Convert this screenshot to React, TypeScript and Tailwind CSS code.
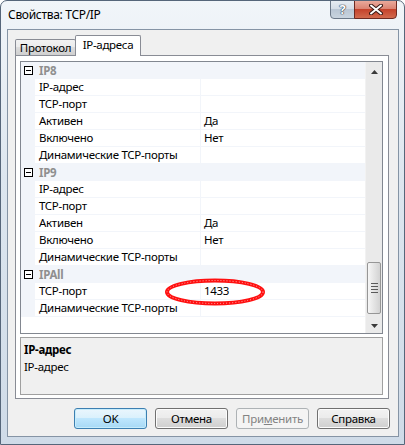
import React from "react";

type Row = [string, string];

const sections: { name: string; rows: Row[] }[] = [
  {
    name: "IP8",
    rows: [
      ["IP-адрес", ""],
      ["TCP-порт", ""],
      ["Активен", "Да"],
      ["Включено", "Нет"],
      ["Динамические TCP-порты", ""],
    ],
  },
  {
    name: "IP9",
    rows: [
      ["IP-адрес", ""],
      ["TCP-порт", ""],
      ["Активен", "Да"],
      ["Включено", "Нет"],
      ["Динамические TCP-порты", ""],
    ],
  },
  {
    name: "IPAll",
    rows: [
      ["TCP-порт", "1433"],
      ["Динамические TCP-порты", ""],
    ],
  },
];

function MinusBox() {
  return (
    <svg width="9" height="9" viewBox="0 0 9 9">
      <rect x="0.5" y="0.5" width="8" height="8" fill="#fff" stroke="#000" />
      <line x1="2" y1="4.5" x2="7" y2="4.5" stroke="#000" />
    </svg>
  );
}

function CategoryRow({ name }: { name: string }) {
  return (
    <div className="flex h-[17px] items-center bg-[#f2f5fa]">
      <div className="flex w-[14px] items-center justify-center pl-[1px]">
        <MinusBox />
      </div>
      <div className="pl-[4px] text-[11.5px] font-bold leading-none text-[#8f8f8f]">
        {name}
      </div>
    </div>
  );
}

function PropRow({ label, value }: { label: string; value: string }) {
  return (
    <div className="flex h-[17px] bg-[#f2f5fa]">
      <div className="w-[14px]" />
      <div className="mb-px flex w-[165px] items-center bg-white pl-[4px] text-[11.5px] leading-none text-black">
        {label}
      </div>
      <div className="ml-px mb-px flex flex-1 items-center bg-white pl-[3px] text-[11.5px] leading-none text-black">
        {value}
      </div>
    </div>
  );
}

function Scrollbar() {
  return (
    <div className="flex w-[17px] flex-col bg-[#eaeaea] border-l border-[#f2f2f2]">
      <div className="flex h-[17px] items-center justify-center pt-[3px]">
        <svg width="7" height="4" viewBox="0 0 7 4">
          <polygon points="3.5,0 7,4 0,4" fill="#3a3a3a" />
        </svg>
      </div>
      <div className="flex-1">
        <div className="mx-[1px] mt-[183px] flex h-[52px] flex-col items-center justify-center gap-[2px] rounded-[2px] border border-[#969696] bg-[linear-gradient(to_right,#f6f6f6,#e4e4e4_50%,#d3d3d3)]">
          <div className="h-px w-[7px] bg-[#5a5a5a]" />
          <div className="h-px w-[7px] bg-[#5a5a5a]" />
          <div className="h-px w-[7px] bg-[#5a5a5a]" />
          <div className="h-px w-[7px] bg-[#5a5a5a]" />
        </div>
      </div>
      <div className="flex h-[17px] items-center justify-center pt-[2px]">
        <svg width="7" height="4" viewBox="0 0 7 4">
          <polygon points="0,0 7,0 3.5,4" fill="#3a3a3a" />
        </svg>
      </div>
    </div>
  );
}

function Button({
  label,
  primary,
  disabled,
}: {
  label: React.ReactNode;
  primary?: boolean;
  disabled?: boolean;
}) {
  const look = primary
    ? "border-[#3c7fb1] bg-[linear-gradient(to_bottom,#eaf6fd,#d9f0fc_50%,#bee6fd_50%,#a7d9f5)] text-black shadow-[inset_0_0_0_1px_#c7ecfb]"
    : disabled
      ? "border-[#adb2b5] bg-[#f4f4f4] text-[#838383]"
      : "border-[#707070] bg-[linear-gradient(to_bottom,#f2f2f2,#ebebeb_50%,#dddddd_50%,#cfcfcf)] text-black shadow-[inset_0_0_0_1px_#fcfcfc]";
  return (
    <div
      className={`flex h-[21px] w-[73px] items-center justify-center rounded-[3px] border text-[11.5px] leading-none ${look}`}
    >
      {label}
    </div>
  );
}

export default function App() {
  return (
    <div className="relative flex h-[445px] w-[405px] flex-col overflow-hidden rounded-t-[7px] border border-[#56667a] bg-[linear-gradient(to_bottom,#f1f5f9,#dde6ef_40%,#cfdbe8)] font-['Noto_Sans','Open_Sans',sans-serif] tracking-[-0.3px]">
      {/* title bar */}
      <div className="flex h-[28px] items-center pl-[7px] text-[12px] text-black">
        Свойства: TCP/IP
      </div>
      <div className="absolute right-[7px] top-[-1px] flex tracking-normal">
        <div className="flex h-[19px] w-[25px] items-center justify-center rounded-bl-[4px] border border-[#6b7888] bg-[linear-gradient(to_bottom,#e6ecf2,#d3dce6_50%,#b9c6d4_50%,#c9d4df)] text-[13px] font-bold leading-none text-white [text-shadow:0_0_1px_#263446,0_0_1px_#263446,0_0_1px_#263446]">
          ?
        </div>
        <div className="-ml-px flex h-[19px] w-[43px] items-center justify-center rounded-br-[4px] border border-[#6d2a22] bg-[linear-gradient(to_bottom,#eaa99b,#d9806f_50%,#c5432c_50%,#d26a4e)]">
          <svg width="14" height="11" viewBox="0 0 14 11">
            <path
              d="M2 1.5 L12 9.5 M12 1.5 L2 9.5"
              stroke="#3b1a16"
              strokeWidth="4"
              strokeLinecap="round"
            />
            <path
              d="M2 1.5 L12 9.5 M12 1.5 L2 9.5"
              stroke="#fff"
              strokeWidth="2"
              strokeLinecap="round"
            />
          </svg>
        </div>
      </div>

      {/* client area */}
      <div className="ml-[6px] mr-[5px] mb-[7px] flex flex-1 flex-col border border-[#8594a5] bg-[#f0f0f0]">
        {/* tabs */}
        <div className="flex h-[25px] items-end pl-[7px]">
          <div className="flex h-[16px] w-[61px] items-center justify-center rounded-t-[2px] border border-b-0 border-[#898c95] bg-[linear-gradient(to_bottom,#f2f2f2,#ebebeb_50%,#dddddd_50%,#cfcfcf)] pt-px text-[11.5px] leading-none text-black">
            Протокол
          </div>
          <div className="relative z-10 -mb-px -ml-px flex h-[21px] w-[66px] items-start justify-center rounded-t-[2px] border border-b-0 border-[#898c95] bg-white pt-[3px] text-[11.5px] leading-none text-black">
            IP-адреса
          </div>
        </div>

        {/* tab panel */}
        <div className="ml-[7px] mr-[9px] flex h-[344px] flex-col border border-[#898c95] bg-white pl-[4px] pr-[5px] pt-[5px]">
          {/* property grid */}
          <div className="flex h-[273px] border border-[#828790] bg-white">
            <div className="flex flex-1 flex-col">
              {sections.map((s) => (
                <React.Fragment key={s.name}>
                  <CategoryRow name={s.name} />
                  {s.rows.map(([l, v], i) => (
                    <PropRow key={i} label={l} value={v} />
                  ))}
                </React.Fragment>
              ))}
            </div>
            <Scrollbar />
          </div>

          {/* description */}
          <div className="mt-[3px] flex h-[58px] flex-col border border-[#a0a0a0] bg-[#f0f0f0] pl-[3px] pt-[3px] text-[11.5px] leading-[17px] text-black">
            <div className="font-bold">IP-адрес</div>
            <div>IP-адрес</div>
          </div>
        </div>

        {/* buttons */}
        <div className="mt-[9px] flex justify-end gap-[8px] pr-[8px]">
          <Button label="OK" primary />
          <Button label="Отмена" />
          <Button
            label={
              <span>
                При<span className="underline">м</span>енить
              </span>
            }
            disabled
          />
          <Button label="Справка" />
        </div>
      </div>

      {/* red annotation ellipse */}
      <svg
        className="pointer-events-none absolute left-[163px] top-[277px]"
        width="102"
        height="28"
        viewBox="0 0 102 28"
      >
        <ellipse
          cx="51"
          cy="14"
          rx="48"
          ry="11.5"
          fill="none"
          stroke="#ff1010"
          strokeWidth="4"
        />
        <ellipse
          cx="51"
          cy="14"
          rx="48"
          ry="11.5"
          fill="none"
          stroke="#ffb0b0"
          strokeWidth="1"
          strokeDasharray="1 2"
        />
      </svg>
    </div>
  );
}
